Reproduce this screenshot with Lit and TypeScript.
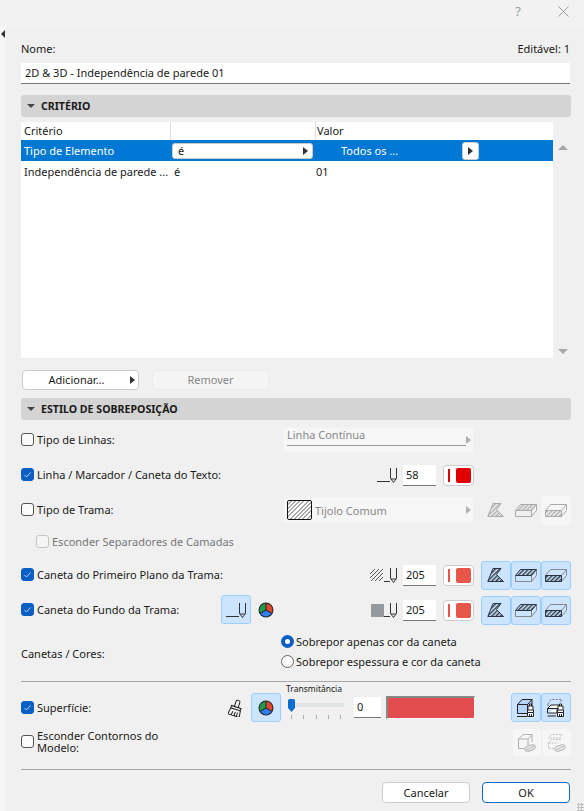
import { LitElement, html, css, svg } from "lit";
import { customElement } from "lit/decorators.js";

const hatch = (id: string, color: string) => svg`<defs><pattern id=${id} width="3" height="3" patternUnits="userSpaceOnUse" patternTransform="rotate(-45)"><rect width="3" height="1.4" fill=${color}></rect></pattern></defs>`;

const pen = (c = "#333") => html`<svg class="pen" viewBox="0 0 20 16" width="20" height="16"><path d="M0 14.5H13M13.5 1V11.5Q13.5 12 14 12H19Q19.5 12 19.5 11.5V1M14 12L16.5 15.5L19 12" fill="none" stroke=${c} stroke-width="1"></path></svg>`;
const penShort = (c = "#333") => html`<svg class="pen" viewBox="7 0 13 16" width="13" height="16"><path d="M7 14.5H13M13.5 1V11.5Q13.5 12 14 12H19Q19.5 12 19.5 11.5V1M14 12L16.5 15.5L19 12" fill="none" stroke=${c} stroke-width="1"></path></svg>`;

const pie = () => html`<svg viewBox="0 0 16 16" width="16" height="16"><circle cx="8" cy="8" r="7.5" fill="#222"></circle><path d="M8 8V1.5A6.5 6.5 0 0 1 13.6 11.2Z" fill="#e0482e"></path><path d="M8 8V1.5A6.5 6.5 0 0 0 2.4 11.2Z" fill="#1f9a4b"></path><path d="M8 8L13.6 11.2A6.5 6.5 0 0 1 2.4 11.2Z" fill="#2f7ff0"></path><path d="M8 8V1M8 8L14 11.5M8 8L2 11.5" stroke="#222" stroke-width="1"></path></svg>`;

let uid = 0;
const cut = (c: string) => {
  const id = `h${uid++}`;
  return html`<svg viewBox="0 0 18 14" width="18" height="14">${hatch(id, c)}<path d="M.8 13.5L6 .5H14L9.5 6.5L16.5 13.5Z" fill="url(#${id})" stroke=${c} stroke-width="1"></path></svg>`;
};
const top = (c: string, c2: string) => {
  const id = `h${uid++}`;
  return html`<svg viewBox="0 0 22 13" width="22" height="13">${hatch(id, c)}<path d="M.5 6.5V12.5H16.5V6.5M16.5 12.5L21.5 6.5V.5" fill="none" stroke=${c2}></path><path d="M.5 6.5L5.5 .5H21.5L16.5 6.5Z" fill="url(#${id})" stroke=${c}></path></svg>`;
};
const side = (c: string, c2: string) => {
  const id = `h${uid++}`;
  return html`<svg viewBox="0 0 22 13" width="22" height="13">${hatch(id, c)}<path d="M.5 6.5L5.5 .5H21.5V6.5L16.5 12.5M21.5 .5L16.5 6.5" fill="none" stroke=${c2}></path><path d="M.5 6.5H16.5V12.5H.5Z" fill="url(#${id})" stroke=${c}></path></svg>`;
};
const brush = (c = "#222") => svg`<path d="M4 7V3H9V7M3.5 7H9.5L9.5 9.5H3.5ZM5.5 3V1H7.5V3M3.5 9.5V13.5H9.5V9.5M5.5 13.5V11M7.5 13.5V11" fill="#fff" stroke=${c} stroke-width="1"></path>`;
const cubeBrush = () => html`<svg viewBox="0 0 20 20" width="20" height="20"><path d="M1.5 6.5L6 1.5H16V10H13V15.5H1.5Z" fill="#b4d4fb" stroke="#222"></path><path d="M1.5 6.5H11.5V15.5M11.5 6.5L16 1.5" fill="none" stroke="#222"></path><path d="M1 18.5H11" stroke="#222"></path><g transform="translate(8 5)">${brush()}</g></svg>`;
const layersBrush = () => html`<svg viewBox="0 0 20 20" width="20" height="20"><path d="M2 6L5 1.5H16L14 5M2 6V8.5" fill="none" stroke="#777" stroke-dasharray="2 1.4"></path><path d="M1.5 15V10.5L5 7H13V10.5H1.5ZM1.5 15H11V10.5" fill="#fff" stroke="#222"></path><path d="M1.5 18H10" stroke="#222"></path><g transform="translate(8 5)">${brush()}</g></svg>`;
const cubeOff = () => html`<svg viewBox="0 0 20 20" width="20" height="20"><path d="M1.5 6V15.5H7M1.5 6L6 1.5H15V9M1.5 6H11V12M11 6L15 1.5" fill="none" stroke="#b0b0b0"></path><ellipse cx="13" cy="15" rx="5.5" ry="2.6" fill="#eee" stroke="#b0b0b0" transform="rotate(-20 13 15)"></ellipse><path d="M9 17L17 13" stroke="#b0b0b0"></path></svg>`;
const layersOff = () => html`<svg viewBox="0 0 20 20" width="20" height="20"><path d="M1.5 5L4.5 1.5H15L13 5H1.5M1.5 10L4.5 6.5H15M1.5 10H11M1.5 10V15.5H7" fill="none" stroke="#c4c4c4" stroke-dasharray="2 1"></path><ellipse cx="13" cy="15" rx="5.5" ry="2.6" fill="#eee" stroke="#b8b8b8" transform="rotate(-20 13 15)"></ellipse><path d="M9 17L17 13" stroke="#b8b8b8"></path></svg>`;
const bigBrush = () => html`<svg viewBox="0 0 16 18" width="16" height="18"><g transform="rotate(18 8 9)" fill="none" stroke="#222"><path d="M6 8V2.5Q6 1 8 1Q10 1 10 2.5V8"></path><path d="M3 8H13V10.5H3Z"></path><path d="M3 10.5L2 17H14L13 10.5M5.5 17L6 13M8.5 17V13M11 17L10.8 13"></path></g></svg>`;

@customElement("app-root")
export class AppRoot extends LitElement {
  static styles = css`
    :host { display: block; width: 584px; height: 811px; position: relative; overflow: hidden; background: #f0f0f0; font: 11px "Noto Sans", sans-serif; color: #1a1a1a; }
    * { box-sizing: border-box; }
    .title { height: 27px; background: #f2f2f2; display: flex; align-items: center; justify-content: flex-end; gap: 37px; padding: 0 15px 5px 0; color: #999; }
    .q { font-size: 13px; }
    .main { display: flex; height: 784px; }
    .strip { width: 6px; background: #f5f5f5; padding-top: 3px; flex: none; }
    .tri-l { width: 0; height: 0; border: 4px solid transparent; border-left-width: 0; border-right: 4px solid #333; margin-left: 1px; }
    .body { width: 565px; margin-left: 15px; flex: none; }
    .nome { height: 36px; width: 549px; display: flex; justify-content: space-between; align-items: flex-end; line-height: 16px; padding-bottom: 6px; }
    .name { height: 21px; width: 549px; background: #fff; border-bottom: 1px solid #777; padding: 0 4px; line-height: 20px; }
    .sec { height: 22px; width: 550px; background: #d4d4d4; border-radius: 3px; margin-top: 11px; display: flex; align-items: center; gap: 6px; padding: 0 0 1px 6px; font-weight: 700; font-size: 10.6px; }
    .down { width: 0; height: 0; border: 4px solid transparent; border-top: 4px solid #444; border-bottom-width: 0; }
    .tablewrap { display: flex; margin-top: 5px; }
    .table { width: 532px; height: 236px; background: #fff; }
    .tr { display: grid; grid-template-columns: 147px 145px 1fr; height: 21px; align-items: center; padding-left: 3px; }
    .th { height: 18px; }
    .th > span { height: 18px; line-height: 18px; border-right: 1px solid #e0e0e0; }
    .th > span:last-child { border: 0; padding-left: 1px; }
    .sel { background: #0078d4; color: #fff; }
    .cell { display: flex; align-items: center; }
    .is { padding-left: 3px; }
    .popup { width: 141px; height: 16px; margin-left: 1px; background: #fff; color: #1a1a1a; border: 1px solid #ccc; border-radius: 3px; display: flex; align-items: center; justify-content: space-between; padding: 0 4px 0 5px; }
    .right { width: 0; height: 0; border: 4px solid transparent; border-left: 5px solid #333; border-right-width: 0; }
    .dim.right { border-left-color: #b0b0b0; }
    .todos { padding-left: 25px; flex: 1; }
    .popmini { width: 17px; height: 18px; background: #fff; border: 1px solid #ccc; border-radius: 3px; display: flex; align-items: center; justify-content: center; margin-right: 74px; }
    .scroll { width: 18px; margin-left: 1px; display: flex; flex-direction: column; justify-content: space-between; align-items: center; padding: 23px 0 4px; }
    .sup { border: 5px solid transparent; border-top-width: 0; border-bottom: 5px solid #a8a8a8; width: 0; height: 0; }
    .sdn { border: 5px solid transparent; border-bottom-width: 0; border-top: 5px solid #a8a8a8; width: 0; height: 0; }
    .btns { display: flex; gap: 13px; padding: 12px 0 0 1px; }
    .btn { width: 117px; height: 20px; background: #fff; border: 1px solid #ccc; border-radius: 4px; display: flex; align-items: center; justify-content: center; position: relative; padding: 0 0 2px; }
    .btn.add { padding-right: 8px; }
    .btn.off { background: #f4f4f4; border-color: #ececec; color: #888; }
    .btn .right { position: absolute; right: 3px; top: 5px; }
    .sec2 { margin-top: 8px; }
    .row { display: flex; align-items: center; height: 26px; }
    .lbl { width: 262px; display: flex; align-items: center; gap: 3px; padding-bottom: 1px; }
    .cb { width: 13px; height: 13px; border: 1px solid #555; border-radius: 3px; background: #fbfbfb; flex: none; }
    .cb.on { background: #0a5fc4; border-color: #0a5fc4; display: flex; align-items: center; justify-content: center; }
    .cb.dis { border-color: #c4c4c4; background: #f4f4f4; }
    .dis-t { color: #777; }
    .r1 { margin-top: 7px; }
    .r2 { margin-top: 9px; }
    .r4 { margin-top: 6px; padding-left: 15px; }
    .r5 { margin-top: 7px; }
    .ctrl { width: 288px; display: grid; grid-template-columns: 191px 1fr; column-gap: 7px; align-items: center; }
    .drop { height: 26px; background: #f6f6f6; border-radius: 3px; border: 1px solid #f2f2f2; display: flex; align-items: center; color: #888; padding-left: 3px; position: relative; gap: 3px; }
    .drop .line { position: absolute; left: 3px; right: 7px; bottom: 6px; border-bottom: 1px solid #999; }
    .drop .right { position: absolute; right: 2px; top: 8px; }
    .tjsw { width: 25px; height: 20px; border: 1px solid #111; border-radius: 2px; background: repeating-linear-gradient(135deg, #fff 0 1.6px, #aaa 1.6px 3px); }
    .txt-t { margin-top: -11px; }
    .pens { display: flex; align-items: center; justify-content: flex-end; }
    .pen { flex: none; }
    .num { width: 33px; height: 21px; background: #fff; border-bottom: 1px solid #777; padding-left: 3px; line-height: 20px; flex: none; margin-left: 6px; }
    .col { width: 31px; height: 21px; background: #fff; border: 1px solid #ccc; border-radius: 4px; display: flex; align-items: center; gap: 6px; padding-left: 4px; margin-left: 7px; flex: none; }
    .col i { display: block; width: 2px; height: 13px; }
    .col b { display: block; width: 15px; height: 15px; border-radius: 2px; }
    .red i, .red b { background: #e00000; }
    .sal i, .sal b { background: #e6574a; }
    .tools { display: flex; gap: 0; }
    .tb { width: 30px; height: 29px; display: flex; align-items: center; justify-content: center; flex: none; }
    .on-b { background: #cce4ff; border: 1px solid #99ceff; border-radius: 3px; }
    .off-b { background: #f6f6f6; border-radius: 3px; }
    .small { width: 28px; height: 27px; }
    .fw { display: flex; align-items: center; }
    .fw .lab { width: 184px; margin-left: 3px; }
    .pc { display: flex; align-items: center; margin-left: 7px; }
    .radios { height: 47px; align-items: flex-start; margin-top: 11px; }
    .radios .lbl { padding-top: 12px; width: 260px; }
    .rlist { display: flex; flex-direction: column; gap: 4px; }
    .radio { display: flex; align-items: center; gap: 2px; height: 16px; padding-bottom: 1px; }
    .rd { width: 13px; height: 13px; border-radius: 50%; border: 1px solid #666; background: #fbfbfb; flex: none; }
    .rd.on { background: #fff; border: 4px solid #0a5fc4; }
    .hr { width: 550px; height: 1px; background: #a8a8a8; }
    .surf { height: 29px; margin-top: 11px; }
    .surf .lbl { width: 200px; }
    .brushbtn { width: 30px; display: flex; justify-content: center; flex: none; }
    .slider { width: 60px; margin: -10px 0 0 4px; align-self: flex-start; flex: none; position: relative; height: 38px; }
    .tm { font-size: 8.5px; line-height: 12px; white-space: nowrap; margin-left: 1px; }
    .track { height: 4px; background: #dfe3e3; margin: 8px 0 0 3px; width: 56px; }
    .thumb { position: absolute; left: 3px; top: 16px; }
    .ticks { display: flex; justify-content: space-between; margin: 8px 0 0 6px; width: 50px; }
    .ticks i { display: block; width: 1px; height: 4px; background: #aaa; }
    .n0 { width: 27px; margin-left: 9px; }
    .swatch { width: 89px; height: 23px; margin-left: 5px; background: #e24d4f; border: 1px solid #fff; border-top: 2px solid #888; border-left: 2px solid #888; flex: none; }
    .surf .tools { margin-left: 36px; }
    .hide { height: 40px; margin-top: 7px; align-items: flex-start; }
    .hide .lbl { width: 492px; height: 26px; }
    .hide .two { width: 125px; line-height: 12px; }
    .hide .tools { gap: 2px; }
    .foot { display: flex; justify-content: flex-end; gap: 12px; width: 549px; padding-top: 12px; }
    .fb { width: 88px; height: 21px; background: #fff; border: 1px solid #ccc; border-radius: 4px; display: flex; align-items: center; justify-content: center; padding-bottom: 1px; }
    .fb.ok { border-color: #0a6cc4; }
    .grip { position: absolute; right: 0; bottom: 0; width: 7px; height: 8px; background: radial-gradient(circle, #c0c0c0 1px, transparent 1.1px) 0 0 / 3px 3px; }
  `;

  private cb(on: boolean) {
    return on
      ? html`<span class="cb on"><svg viewBox="0 0 11 11" width="11" height="11"><path d="M2.5 6L4.5 8L8.5 3.5" fill="none" stroke="#bcd6f5" stroke-width="1"></path></svg></span>`
      : html`<span class="cb"></span>`;
  }

  private penRow(icon: unknown, val: string, cls: string) {
    return html`<div class="pens">${icon}<span class="num">${val}</span><span class="col ${cls}"><i></i><b></b></span></div>`;
  }

  private tools() {
    const d = "#2a3540", g = "#888";
    return html`<div class="tools">
      <span class="tb on-b">${cut(d)}</span><span class="tb on-b">${top(d, g)}</span><span class="tb on-b">${side(d, g)}</span>
    </div>`;
  }

  render() {
    const g = "#aaa";
    return html`
      <div class="title"><span class="q">?</span>
        <svg viewBox="0 0 11 11" width="11" height="11"><path d="M.5 .5L10.5 10.5M10.5 .5L.5 10.5" stroke="#999" fill="none"></path></svg>
      </div>
      <div class="main">
        <div class="strip"><div class="tri-l"></div></div>
        <div class="body">
          <div class="nome"><span>Nome:</span><span>Editável: 1</span></div>
          <div class="name">2D &amp; 3D - Independência de parede 01</div>
          <div class="sec"><span class="down"></span>CRITÉRIO</div>
          <div class="tablewrap">
            <div class="table">
              <div class="tr th"><span>Critério</span><span></span><span>Valor</span></div>
              <div class="tr sel"><span>Tipo de Elemento</span>
                <span class="cell"><span class="popup">é<span class="right"></span></span></span>
                <span class="cell"><span class="todos">Todos os ...</span><span class="popmini"><span class="right"></span></span></span></div>
              <div class="tr"><span>Independência de parede ...</span><span class="is">é</span><span>01</span></div>
            </div>
            <div class="scroll"><span class="sup"></span><span class="sdn"></span></div>
          </div>
          <div class="btns">
            <div class="btn add">Adicionar...<span class="right"></span></div>
            <div class="btn off">Remover</div>
          </div>
          <div class="sec sec2"><span class="down"></span>ESTILO DE SOBREPOSIÇÃO</div>
          <div class="row r1" >
            <div class="lbl">${this.cb(false)}Tipo de Linhas:</div>
            <div class="ctrl"><div class="drop"><span class="txt-t">Linha Contínua</span><span class="line"></span><span class="right dim"></span></div></div>
          </div>
          <div class="row r2">
            <div class="lbl">${this.cb(true)}Linha / Marcador / Caneta do Texto:</div>
            <div class="ctrl"><div>${this.penRow(pen(), "58", "red")}</div></div>
          </div>
          <div class="row r2">
            <div class="lbl">${this.cb(false)}Tipo de Trama:</div>
            <div class="ctrl"><div class="drop"><span class="tjsw"></span>Tijolo Comum<span class="right dim"></span></div>
              <div class="tools"><span class="tb">${cut(g)}</span><span class="tb">${top(g, g)}</span><span class="tb off-b">${side(g, g)}</span></div></div>
          </div>
          <div class="row r4"><div class="lbl"><span class="cb dis"></span><span class="dis-t">Esconder Separadores de Camadas</span></div></div>
          <div class="row r5">
            <div class="lbl">${this.cb(true)}Caneta do Primeiro Plano da Trama:</div>
            <div class="ctrl"><div>${this.penRow(html`<svg viewBox="0 0 14 13" width="14" height="13"><path d="M0 5L5 0M0 9L9 0M1 12L13 0M5 12L13 4M9 12L13 8" stroke="#555" fill="none"></path></svg>${penShort()}`, "205", "sal")}</div>${this.tools()}</div>
          </div>
          <div class="row r2">
            <div class="lbl"><span class="fw">${this.cb(true)}<span class="lab">Caneta do Fundo da Trama:</span>
              <span class="tb on-b">${pen()}</span><span class="pc">${pie()}</span></span></div>
            <div class="ctrl"><div>${this.penRow(html`<svg viewBox="0 0 13 13" width="13" height="13"><rect width="13" height="13" fill="#95999c"></rect></svg>${penShort()}`, "205", "sal")}</div>${this.tools()}</div>
          </div>
          <div class="row radios">
            <div class="lbl">Canetas / Cores:</div>
            <div class="rlist">
              <div class="radio"><span class="rd on"></span>Sobrepor apenas cor da caneta</div>
              <div class="radio"><span class="rd"></span>Sobrepor espessura e cor da caneta</div>
            </div>
          </div>
          <div class="hr"></div>
          <div class="row surf">
            <div class="lbl">${this.cb(true)}Superfície:</div>
            <span class="brushbtn">${bigBrush()}</span>
            <span class="tb on-b">${pie()}</span>
            <div class="slider"><div class="tm">Transmitância</div><div class="track"></div>
              <svg class="thumb" viewBox="0 0 7 13" width="7" height="13"><path d="M0 1.5Q0 0 1.5 0H5.5Q7 0 7 1.5V9L3.5 13L0 9Z" fill="#0a6cd0"></path></svg>
              <div class="ticks"><i></i><i></i><i></i><i></i><i></i></div></div>
            <span class="num n0">0</span>
            <span class="swatch"></span>
            <div class="tools"><span class="tb on-b">${cubeBrush()}</span><span class="tb on-b">${layersBrush()}</span></div>
          </div>
          <div class="row hide">
            <div class="lbl">${this.cb(false)}<span class="two">Esconder Contornos do Modelo:</span></div>
            <div class="tools"><span class="tb small off-b">${cubeOff()}</span><span class="tb small off-b">${layersOff()}</span></div>
          </div>
          <div class="hr"></div>
          <div class="foot"><div class="fb">Cancelar</div><div class="fb ok">OK</div></div>
        </div>
      </div>
      <div class="grip"></div>
    `;
  }
}
